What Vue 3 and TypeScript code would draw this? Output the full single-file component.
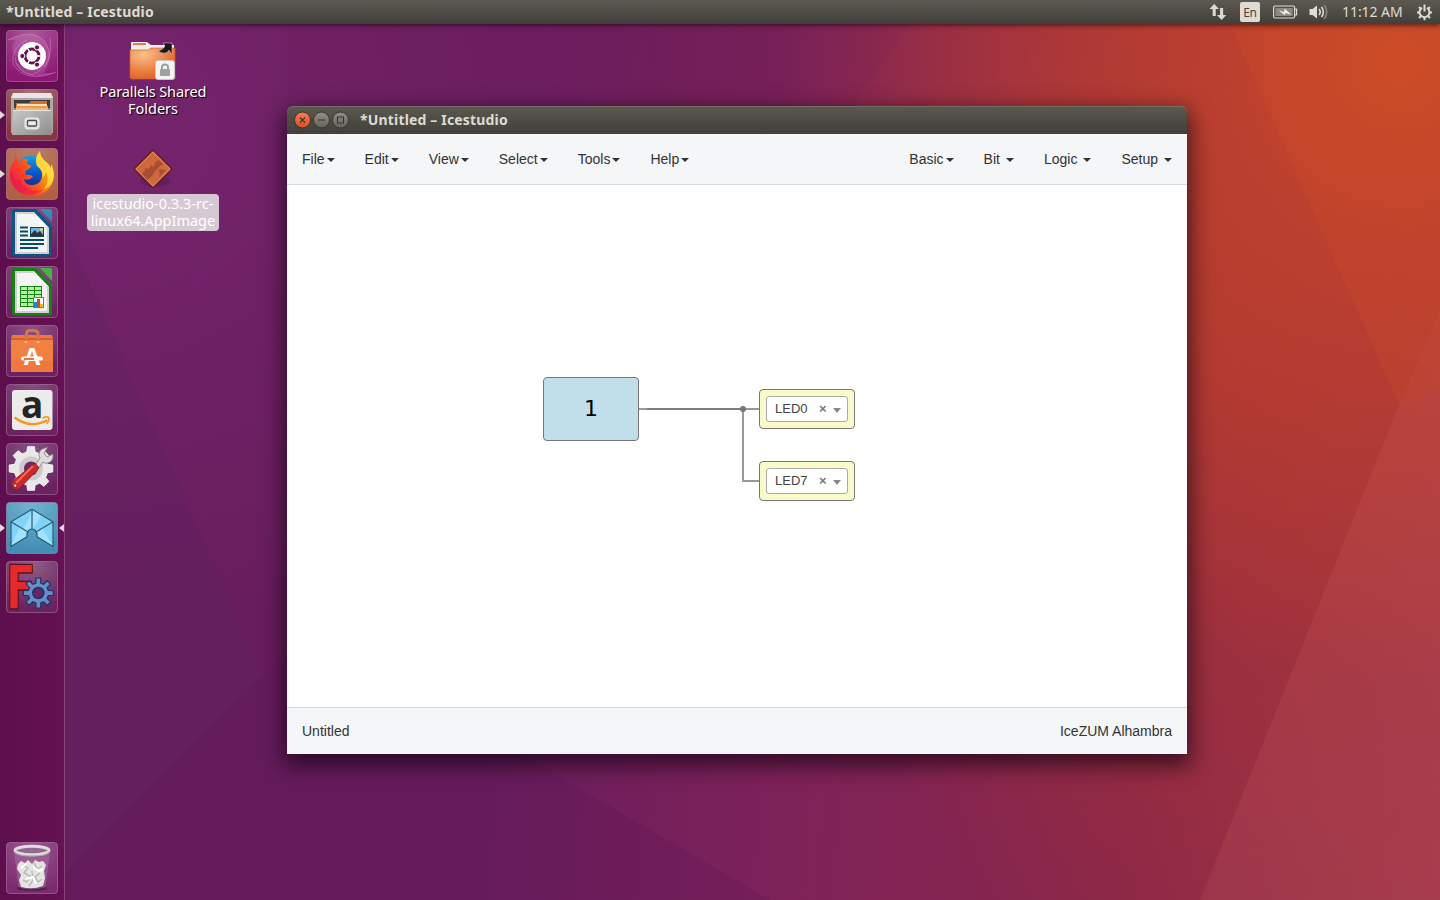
<script setup lang="ts">
interface Tile { id: string; glow: string; edge: string; running?: boolean; focused?: boolean }
interface Menu { label: string; spaced?: boolean }
interface Pin { name: string; top: number }

const tiles: Tile[] = [
  { id: 'ubuntu', glow: '#ad589b', edge: '#8d1875' },
  { id: 'files', glow: '#a97078', edge: '#883541', running: true },
  { id: 'firefox', glow: '#b97c67', edge: '#b16143', running: true },
  { id: 'writer', glow: '#8a5385', edge: '#6b2260' },
  { id: 'calc', glow: '#8a5385', edge: '#6b2260' },
  { id: 'software', glow: '#8a5385', edge: '#6b2260' },
  { id: 'amazon', glow: '#855080', edge: '#6b2260' },
  { id: 'settings', glow: '#855080', edge: '#6b2260' },
  { id: 'icestudio', glow: '#72b4d1', edge: '#438eb4', running: true, focused: true },
  { id: 'freecad', glow: '#906088', edge: '#6b2260' },
  { id: 'trash', glow: '#9d5591', edge: '#7b2c70' },
]
const leftMenus: Menu[] = ['File', 'Edit', 'View', 'Select', 'Tools', 'Help'].map(label => ({ label }))
const rightMenus: Menu[] = [
  { label: 'Basic' },
  { label: 'Bit', spaced: true },
  { label: 'Logic', spaced: true },
  { label: 'Setup', spaced: true },
]
const pins: Pin[] = [{ name: 'LED0', top: 204 }, { name: 'LED7', top: 276 }]

function gear(cx: number, cy: number, teeth: number, outer: number, inner: number): string {
  const pts: string[] = []
  const step = (Math.PI * 2) / teeth
  for (let i = 0; i < teeth; i++) {
    const a = i * step - Math.PI / 2
    const spots: [number, number][] = [[-0.31, inner], [-0.2, outer], [0.2, outer], [0.31, inner]]
    for (const [o, r] of spots) {
      pts.push(`${(cx + r * Math.cos(a + o * step)).toFixed(2)},${(cy + r * Math.sin(a + o * step)).toFixed(2)}`)
    }
  }
  return pts.join(' ')
}
</script>

<template>
  <div class="desktop">
    <svg class="wallpaper" viewBox="0 0 1440 900" preserveAspectRatio="none">
      <path d="M64 225L262 676L64 875Z" fill="#5a2360" opacity=".3" />
      <path d="M64 875L287 652L520 754L770 900H64Z" fill="#541653" opacity=".2" />
      <path d="M910 24L850 110H287V24Z" fill="#6c1e52" opacity=".1" />
      <path d="M1230 24H1440V310L1399 405Z" fill="#e35a1c" opacity=".16" />
      <path d="M1440 310L1399 405L1440 393Z" fill="#f27545" opacity=".14" />
      <path d="M1399 405L1440 393V900H1200Z" fill="#f58a83" opacity=".1" />
    </svg>

    <header class="panel">
      <span class="panel-title">*Untitled – Icestudio</span>
      <div class="indicators">
        <svg class="net" width="18" height="18" viewBox="0 0 18 18"><path d="M5.2 1L10 6H6.7V13H3.7V6H.5ZM12.6 17L8 12H11.1V5H14.1V12H17.3Z" fill="#dfdbd2" /></svg>
        <span class="lang">En</span>
        <svg class="battery" width="25" height="14" viewBox="0 0 25 14">
          <rect x=".6" y="1" width="21" height="12" rx="1.5" fill="none" stroke="#dfdbd2" stroke-width="1.2" />
          <rect x="2.5" y="3" width="17.2" height="8" fill="#8b8982" /><path d="M22 4H23.6V10H22" fill="none" stroke="#dfdbd2" stroke-width="1.2" />
          <path d="M5.5 5L11 7L11.6 3.6L18.5 9.7L12.5 7.9L11.8 10.3Z" fill="#f0ede5" />
        </svg>
        <svg class="sound" width="20" height="16" viewBox="0 0 20 16">
          <path d="M.5 5H3.5L8 1.5V14.5L3.5 11H.5Z" fill="#dfdbd2" />
          <path d="M10 5Q12.5 8 10 11M12.5 3Q16.3 8 12.5 13" fill="none" stroke="#dfdbd2" stroke-width="1.6" />
          <path d="M15.2 1Q20.4 8 15.2 15" fill="none" stroke="#87857c" stroke-width="1.6" />
        </svg>
        <span class="clock">11:12 AM</span>
        <svg class="session" width="17" height="17" viewBox="0 0 17 17">
          <path d="M6 3.9A5 5 0 1 0 11 3.9" fill="none" stroke="#dfdbd2" stroke-width="2" />
          <path d="M8.5.5V7.5M1 8.5H3M14 8.5H16M8.5 14V16.3M3 3L4.8 4.8M14 3L12.2 4.8M3 14L4.8 12.2M14 14L12.2 12.2" stroke="#dfdbd2" stroke-width="2" />
        </svg>
      </div>
    </header>

    <div class="workspace">
      <nav class="launcher">
        <div v-for="tile in tiles" :key="tile.id" class="slot" :class="tile.id">
          <i v-if="tile.running" class="arrow running" />
          <i v-if="tile.focused" class="arrow focused" />
          <svg class="tile" width="52" height="52" viewBox="0 0 52 52">
            <defs>
              <radialGradient :id="'tile-' + tile.id" cx=".5" cy="0" r=".95">
                <stop offset="0" :stop-color="tile.glow" /><stop offset="1" :stop-color="tile.edge" />
              </radialGradient>
            </defs>
            <rect x=".5" y=".5" width="51" height="51" rx="3.5" :fill="`url(#tile-${tile.id})`" stroke="#fff" stroke-opacity=".24" />

            <g v-if="tile.id === 'ubuntu'">
              <g fill="none" stroke="#e3a6d6" stroke-opacity=".4">
                <path d="M2 10Q28-3 40 13Q48 29 38 37" /><path d="M44 8Q48 35 26 45Q10 42 9 27" /><path d="M50 42Q20 54 7 34Q5 17 21 10" />
              </g>
              <path d="M2 10Q28-3 40 13Q48 29 38 37L26 12Q12 12 11 28Q2 18 10 10ZM50 43Q19 53 8 31L19 39Q35 43 43 28Q42 38 38 43Z" fill="#e4a4d5" opacity=".2" />
              <circle cx="26" cy="26" r="14" fill="#fff" />
              <circle cx="26" cy="26" r="7" fill="none" stroke="#68144d" stroke-width="3" />
              <path d="M26 26H38M26 26L20 15.6M26 26L20 36.4" stroke="#fff" stroke-width="1.5" />
              <g fill="#68144d" stroke="#fff" stroke-width="1"><circle cx="16.3" cy="26" r="2.6" /><circle cx="31" cy="17.4" r="2.6" /><circle cx="31" cy="34.6" r="2.6" /></g>
              <circle cx="26" cy="26" r="5.2" fill="#fff" />
            </g>

            <g v-else-if="tile.id === 'files'">
              <path d="M7 4H45L47 9V44H5V9Z" fill="#aaa9a7" /><path d="M7 4H45L47 9H5Z" fill="#e7e6e4" />
              <rect x="8" y="11" width="36" height="12" fill="#413a38" />
              <path d="M10 14H23L25 12H41V23H10Z" fill="#d86c32" /><rect x="11" y="15" width="30" height="2" fill="#ffe1c2" />
              <rect x="10" y="17" width="32" height="5" fill="#f29a49" /><path d="M8 20H44" stroke="#ffd49c" />
              <path d="M7 21H45L46 46H6Z" fill="url(#cabinet)" /><path d="M7 21.5H45" stroke="#e5e5e5" />
              <rect x="19" y="29" width="14" height="11" rx="2.2" fill="#ddd" stroke="#efefef" /><rect x="21.5" y="31.5" width="9" height="5.5" rx="1" fill="#ededed" stroke="#4b4b4b" stroke-width="1.3" />
              <defs><linearGradient id="cabinet" x2="1" y2="1"><stop stop-color="#c8c8c7" /><stop offset="1" stop-color="#8d8d8c" /></linearGradient></defs>
            </g>

            <g v-else-if="tile.id === 'firefox'">
              <defs>
                <linearGradient id="fox" x1="0" y1=".7" x2="1" y2=".2"><stop stop-color="#ed174d" /><stop offset=".4" stop-color="#ff501b" /><stop offset=".72" stop-color="#ff9b0b" /><stop offset="1" stop-color="#ffe14a" /></linearGradient>
                <linearGradient id="globe" x2="0" y2="1"><stop stop-color="#10a7e6" /><stop offset=".5" stop-color="#0660d6" /><stop offset="1" stop-color="#132b86" /></linearGradient>
              </defs>
              <circle cx="26.5" cy="23" r="16" fill="url(#globe)" />
              <path d="M10 4Q8 8 9 12Q3 19 4 28C5 40 15 48 26 48C38 48 47 40 48 28Q48 21 45 16V20Q42 15 38 12Q34 8 34 3Q28 9 31 18Q37 22 36 29Q34 37 26 37Q19 37 18 31Q22 33 27 29Q25 26 20 27Q18 23 21 22L25 19Q25 17 21 16Q20 14 22 11Q17 10 14 14Q10 12 10 4Z" fill="url(#fox)" />
              <path d="M34 3Q28 9 31 18Q38 23 36 30Q39 28 40 24Q44 34 38 41Q50 36 47 23L45 16V20Q42 15 38 12Q34 8 34 3Z" fill="#ffe142" opacity=".85" />
              <path d="M4 23Q2 38 16 45Q29 49 37 42Q19 45 13 31Q7 30 4 23Z" fill="#ed1857" opacity=".55" />
            </g>

            <g v-else-if="tile.id === 'writer' || tile.id === 'calc'">
              <path d="M9 2H30L46 19V46.5Q46 49.5 43 49.5H9Q6 49.5 6 46.5V5Q6 2 9 2Z" :fill="tile.id === 'writer' ? '#0c5683' : '#148313'" />
              <path d="M9 5H28L43 21V47H9Z" fill="#d0d0d0" /><path d="M11 7H27L41 22V45H11Z" fill="#f4f4f4" /><path d="M27 5L43 21L34 18Z" fill="#fff" />
              <path d="M34 2H44Q46 2 46 4V15Z" :fill="tile.id === 'writer' ? '#338bb6' : '#43b642'" />
              <g v-if="tile.id === 'writer'">
                <path d="M14 20.5H22M14 24.5H22M14 28.5H22M14 33H38M14 37H38M14 41H32" stroke="#074a70" stroke-width="2" />
                <rect x="24.5" y="20.5" width="13" height="9" fill="#69b6e8" stroke="#074a70" /><path d="M25 29V27L29 23L31 26L34 24L37 28V29Z" fill="#333" /><circle cx="35.5" cy="22.5" r="1.5" fill="#f6d337" />
              </g>
              <g v-else>
                <rect x="14.5" y="20.5" width="21" height="20" fill="#b7f0a2" stroke="#128712" /><path d="M14 24.5H36M14 28.5H36M14 32.5H36M14 36.5H36M21.5 20V41M28.5 20V41" stroke="#128712" />
                <rect x="27.5" y="31.5" width="10" height="10" fill="#fff" stroke="#777" /><path d="M29.5 36V41" stroke="#1687d1" stroke-width="3" /><path d="M32.5 33V41" stroke="#d74a1b" stroke-width="3" /><path d="M35.5 38V41" stroke="#f2bd1a" stroke-width="3" />
              </g>
            </g>

            <g v-else-if="tile.id === 'software'">
              <path d="M6 10H46L47 14V47H5V14Z" fill="#ef783d" /><path d="M5 13H47V36Q25 37 5 34Z" fill="#f58648" opacity=".6" /><path d="M5 14H47" stroke="#c3552f" stroke-width="1.5" />
              <path d="M20.5 18V8.5Q20.5 5.5 24 5.5H28Q32 5.5 32 8.5V18" fill="none" stroke="#dd7247" stroke-width="3" /><path d="M20 16V18M32 16V18" stroke="#ffab72" stroke-width="3" />
              <text x="26" y="40" text-anchor="middle" class="bag-letter">A</text>
              <path d="M17 33.5H35" stroke="#fff" stroke-width="4" stroke-linecap="round" /><path d="M18 34H28" stroke="#ee763c" stroke-width="2" />
            </g>

            <g v-else-if="tile.id === 'amazon'">
              <rect x="6" y="6" width="40.5" height="40" rx="3" fill="#ececeb" />
              <text x="26.2" y="33.5" text-anchor="middle" class="amazon-letter">a</text>
              <path d="M8.5 33.5Q25 45.5 41 36" fill="none" stroke="#f7991d" stroke-width="2.6" /><path d="M36.5 34.2Q41 31.8 43 34Q43 37.5 40.5 39.5" fill="none" stroke="#f7991d" stroke-width="1.8" />
            </g>

            <g v-else-if="tile.id === 'settings'">
              <polygon :points="gear(25, 25.5, 8, 22, 17)" fill="#e8e8e6" stroke="#f7f7f6" /><circle cx="25" cy="25.5" r="12" fill="#cccbc9" /><circle cx="25" cy="25.5" r="7" fill="#6c2865" />
              <path d="M26 27L34 15Q31 9 36 6L42 4L38 10L41 14L47 11Q48 18 42 20Q39 21 37 19L29 30Z" fill="#dedddc" stroke="#777" stroke-width=".8" />
              <path d="M29 20L33 25L14 45Q10 48 7 45Q4 42 7 38Z" fill="#ca2927" stroke="#9e1d20" /><path d="M27 23L10 40" stroke="#ef6b5a" stroke-width="2" /><circle cx="9.2" cy="42.6" r="1.8" fill="#e7d6d6" stroke="#8a1818" />
            </g>

            <g v-else-if="tile.id === 'icestudio'">
              <path d="M26 7.3L47 19.8V44.4L31 34.8Q31 27 26 27Q21 27 21 34.8L5 44.4V19.8Z" fill="#81d4f7" />
              <path d="M26 7.3L35 13Q30 23 26 27Q22 27 21 30L17 27Q23 19 26 7.3ZM5 44L14 25L21 30V34.8ZM36 26L47 44L31 35V30Z" fill="#b3eaff" opacity=".65" />
              <path d="M26 7.3L47 19.8V44.4L31 34.8Q31 27 26 27Q21 27 21 34.8L5 44.4V19.8ZM26 7.3V27M5 19.8L21.5 29.8M47 19.8L30.5 29.8M21 34.8V31M31 34.8V31" fill="none" stroke="#285d73" stroke-width="1.2" />
            </g>

            <g v-else-if="tile.id === 'freecad'">
              <text transform="translate(0 48) scale(.74 1)" x="-.2" y="0" class="cad-letter">F</text>
              <polygon :points="gear(32.3, 32, 8, 15.2, 10.3)" fill="#648fc9" stroke="#173664" stroke-width="1.2" /><circle cx="32.3" cy="32" r="5.5" fill="#69255f" stroke="#173664" stroke-width="1.5" />
            </g>

            <g v-else-if="tile.id === 'trash'">
              <ellipse cx="26" cy="46" rx="15" ry="3" fill="#301330" opacity=".55" />
              <path d="M9 11L13 45Q25 49 39 45L43 11Z" fill="#b68bb4" opacity=".32" stroke="#c8a6c7" />
              <path d="M12 22L15 19L19 21L22 18L26 22L29 18L33 20L37 19L40 23L38 29L39 36L37 44Q27 48 15 45L13 38L15 33L11 27Z" fill="#e4e5e2" />
              <path d="M17 23L22 26L18 31L24 34L21 40L17 38M28 20L31 27L36 24M34 31L29 35L32 40L36 37M23 44L27 38L26 29" fill="none" stroke="#b8bab4" stroke-width="1.4" /><path d="M15 26L20 22M27 25L33 29L37 27M20 37L27 35L30 42" stroke="#fff" fill="none" stroke-width="2" />
              <ellipse cx="26" cy="8.5" rx="17" ry="4.2" fill="#946991" stroke="#dddeda" stroke-width="3" /><path d="M8.5 9.5Q10 14 26 14T43.5 9.5" fill="none" stroke="#a8aaa5" />
            </g>
          </svg>
        </div>
      </nav>

      <div class="shortcut folder">
        <svg width="48" height="40" viewBox="0 0 48 40">
          <defs><radialGradient id="folder" cx=".3" cy=".2" r="1"><stop stop-color="#f9c28c" /><stop offset=".6" stop-color="#e9793a" /><stop offset="1" stop-color="#d85321" /></radialGradient></defs>
          <path d="M2 2Q2 1 3 1H18L22 4H45V35H2Z" fill="#f0eeec" /><path d="M4 3H17" stroke="#eb7a45" stroke-width="2" />
          <path d="M1 9H19L22 7H46V37Q46 38 45 38H3Q1 38 1 36Z" fill="url(#folder)" stroke="#cc5e31" stroke-width=".7" />
          <path d="M29 10Q37 15 40 9L43 14V2H34L36 5Q35 8 29 10Z" fill="#181818" stroke="#ddd" stroke-width=".5" />
          <rect x="26.5" y="19.5" width="19" height="19" rx="2.5" fill="#f4f4f3" stroke="#c8c7c6" /><path d="M33 29V26Q33 23.5 36 23.5T39 26V29" fill="none" stroke="#a0a0a0" stroke-width="2" /><rect x="31" y="28" width="10" height="7" rx="1" fill="#a0a0a0" />
        </svg>
        <span class="caption"><b class="c1">Parallels Shared</b><b class="c2">Folders</b></span>
      </div>
      <div class="shortcut appimage">
        <svg width="44" height="44" viewBox="0 0 44 44">
          <ellipse cx="24" cy="34" rx="15" ry="6" fill="#431347" opacity=".3" />
          <path d="M22 3L41 22L22 41L3 22Z" fill="#cf683f" stroke="#602020" stroke-width="1.5" stroke-linejoin="round" /><path d="M22 5L39 22L22 39L5 22Z" fill="none" stroke="#ed895a" />
          <path d="M13 29L11 26L14 24V21L18 22L20 18L23 20L24 15L28 13L32 17Q26 20 21 29L16 33ZM27 22L35 23L28 30Q30 25 27 22Z" fill="#8e402b" opacity=".65" />
        </svg>
        <span class="caption selected"><b class="c3">icestudio-0.3.3-rc-</b><b class="c4">linux64.AppImage</b></span>
      </div>
    </div>

    <section class="window">
      <header class="titlebar">
        <svg width="56" height="18" viewBox="0 0 56 18">
          <defs><linearGradient id="orange" x2="0" y2="1"><stop stop-color="#f58058" /><stop offset="1" stop-color="#df4d1c" /></linearGradient><linearGradient id="gray" x2="0" y2="1"><stop stop-color="#929087" /><stop offset="1" stop-color="#65635c" /></linearGradient></defs>
          <g stroke="#34332e"><circle cx="8.5" cy="9" r="8" fill="url(#orange)" /><circle cx="27.5" cy="9" r="8" fill="url(#gray)" /><circle cx="46.5" cy="9" r="8" fill="url(#gray)" /></g>
          <path d="M6 6.5L11 11.5M11 6.5L6 11.5M24 9H31M43.5 6H49.5V12H43.5Z" fill="none" stroke="#35332e" stroke-width="1.1" />
        </svg>
        <span class="window-title">*Untitled – Icestudio</span>
      </header>
      <nav class="menubar">
        <div class="menus"><span v-for="menu in leftMenus" :key="menu.label" class="menu">{{ menu.label }}<i class="caret" /></span></div>
        <div class="menus"><span v-for="menu in rightMenus" :key="menu.label" class="menu">{{ menu.label }}<i class="caret" :class="{ spaced: menu.spaced }" /></span></div>
      </nav>
      <main class="canvas">
        <svg class="wires" width="900" height="522" viewBox="0 0 900 522">
          <path d="M352 224H472M456 224V296H472" fill="none" stroke="#999" stroke-width="2" /><path d="M360 224H456" stroke="#7c7f7d" stroke-width="2" /><circle cx="456" cy="224" r="3" fill="#777" />
        </svg>
        <div class="constant">1</div>
        <div v-for="pin in pins" :key="pin.name" class="output" :style="{ top: pin.top + 'px' }">
          <div class="select"><span>{{ pin.name }}</span><b>×</b><i /></div>
        </div>
      </main>
      <footer class="status"><span>Untitled</span><span>IceZUM Alhambra</span></footer>
    </section>
  </div>
</template>

<style>
html, body { margin: 0; overflow: hidden; }
</style>

<style scoped>
.desktop {
  position: relative; width: 1440px; height: 900px; overflow: hidden;
  font-family: "Noto Sans", "Open Sans", sans-serif;
  background:
    radial-gradient(ellipse 620px 620px at 1400px 60px, #c94b28 0%, rgba(194,67,44,.82) 28%, rgba(184,56,46,0) 100%),
    radial-gradient(ellipse 430px 700px at 1230px 330px, rgba(179,56,44,.7) 0%, rgba(170,52,52,0) 100%),
    radial-gradient(ellipse 620px 520px at 64px 120px, rgba(120,38,112,.85), rgba(115,35,105,0)),
    linear-gradient(95deg, #681d5d 0%, #691d5e 35%, #7d2259 56%, #8a2749 80%, #9d354a 100%);
}
.wallpaper { position: absolute; left: 0; top: 0; width: 1440px; height: 900px; }
.panel {
  position: relative; box-sizing: border-box; height: 24px; padding: 0 7px 0 6px; display: flex; justify-content: space-between; align-items: center;
  background: linear-gradient(#5c5a50, #403f3a); color: #dfdbd2; box-shadow: 0 1px 5px rgba(20,0,10,.7); z-index: 2;
}
.panel-title, .window-title { font-size: 14px; font-weight: 700; line-height: 24px; letter-spacing: .17px; white-space: nowrap; color: #dfdbd2; }
.indicators { display: flex; align-items: center; height: 24px; }
.net { margin-right: 13px; }
.lang { box-sizing: border-box; width: 20px; height: 20px; margin-right: 13px; border-radius: 2px; background: #dfdbd2; color: #45443e; font-size: 12px; line-height: 21px; text-align: center; letter-spacing: -.2px; }
.battery { margin-right: 11px; }
.sound { margin-right: 13px; }
.clock { width: 62px; margin-right: 12px; font-size: 14px; letter-spacing: -.05px; white-space: nowrap; line-height: 24px; }
.workspace { position: relative; height: 876px; }
.launcher { box-sizing: border-box; width: 65px; height: 876px; padding: 6px 0 6px 6px; display: flex; flex-direction: column; gap: 7px; border-right: 1px solid #894379; background: linear-gradient(90deg, #5d0e4d, #651153); }
.slot { position: relative; width: 52px; height: 52px; }
.slot.trash { margin-top: auto; }
.tile { display: block; }
.arrow { position: absolute; top: 22px; width: 0; height: 0; border-top: 4px solid transparent; border-bottom: 4px solid transparent; }
.running { left: -6px; border-left: 5px solid #dedada; }
.focused { right: -6px; border-right: 5px solid #dedada; }
.bag-letter { font: 700 24px "Open Sans", sans-serif; fill: #fff; }
.amazon-letter { font: 700 37px "Open Sans", sans-serif; fill: #242424; }
.cad-letter { font: 700 60px "DejaVu Sans", sans-serif; fill: #e8292c; stroke: #5b1111; stroke-width: 1.4px; }
.shortcut { position: absolute; display: flex; flex-direction: column; align-items: center; left: 87px; width: 132px; }
.folder { top: 17px; }
.appimage { top: 123px; }
.folder svg, .appimage svg { display: block; }
.caption { display: flex; flex-direction: column; align-items: center; width: 132px; color: #fff; font-size: 14.5px; line-height: 17px; white-space: nowrap; text-shadow: 1px 1px 1px #000; }
.caption b { font-weight: 400; }
.folder .caption { margin-top: 2px; }
.c1 { letter-spacing: -.12px; }
.selected { box-sizing: border-box; height: 37px; margin-top: 3px; padding-top: 1px; border-radius: 4px; background: #d6c9d3; text-shadow: none; }
.window { position: absolute; left: 287px; top: 106px; width: 900px; height: 648px; display: flex; flex-direction: column; border-radius: 6px 6px 0 0; overflow: visible; color: #333; font: 14px/20px "Liberation Sans", Arial, sans-serif; box-shadow: 0 8px 22px 3px rgba(15,0,15,.68); }
.titlebar { display: flex; align-items: center; height: 28px; box-sizing: border-box; padding-left: 7px; border-radius: 6px 6px 0 0; background: linear-gradient(#5b594f, #403f3a); box-shadow: inset 0 1px #706e63; }
.window-title { margin-left: 10px; font-family: "Noto Sans", sans-serif; line-height: 28px; }
.menubar { box-sizing: border-box; height: 51px; display: flex; justify-content: space-between; border-bottom: 1px solid #d3dce0; background: #f5f6f8; }
.menus { display: flex; }
.menu { display: flex; align-items: center; padding: 0 15px; white-space: nowrap; }
.caret { border: 4px solid transparent; border-top-color: #333; border-bottom: 0; margin-left: 2px; margin-top: 1px; }
.caret.spaced { margin-left: 6px; }
.canvas { position: relative; height: 522px; background: #fff; }
.wires { position: absolute; left: 0; top: 0; }
.constant { position: absolute; box-sizing: border-box; left: 256px; top: 192px; width: 96px; height: 64px; border: 1px solid #777; border-radius: 4px; background: #c0dfeb; color: #000; text-align: center; font: 22px/62px "DejaVu Sans", sans-serif; }
.output { position: absolute; box-sizing: border-box; left: 472px; width: 96px; height: 40px; padding: 6px; border: 1px solid #777; border-radius: 4px; background: #fafac8; }
.select { box-sizing: border-box; height: 26px; display: flex; align-items: center; padding-left: 8px; border: 1px solid #aaa; border-radius: 3px; background: #fff; font-size: 13px; line-height: 24px; color: #444; }
.select span { width: 44px; }
.select b { width: 8px; margin-right: 6px; color: #777; }
.select i { margin-top: 3px; border: 4px solid transparent; border-top: 5px solid #888; border-bottom: 0; }
.status { box-sizing: border-box; height: 47px; padding: 0 15px; display: flex; align-items: center; justify-content: space-between; border-top: 1px solid #d3dadd; background: #f5f6f8; }
</style>
